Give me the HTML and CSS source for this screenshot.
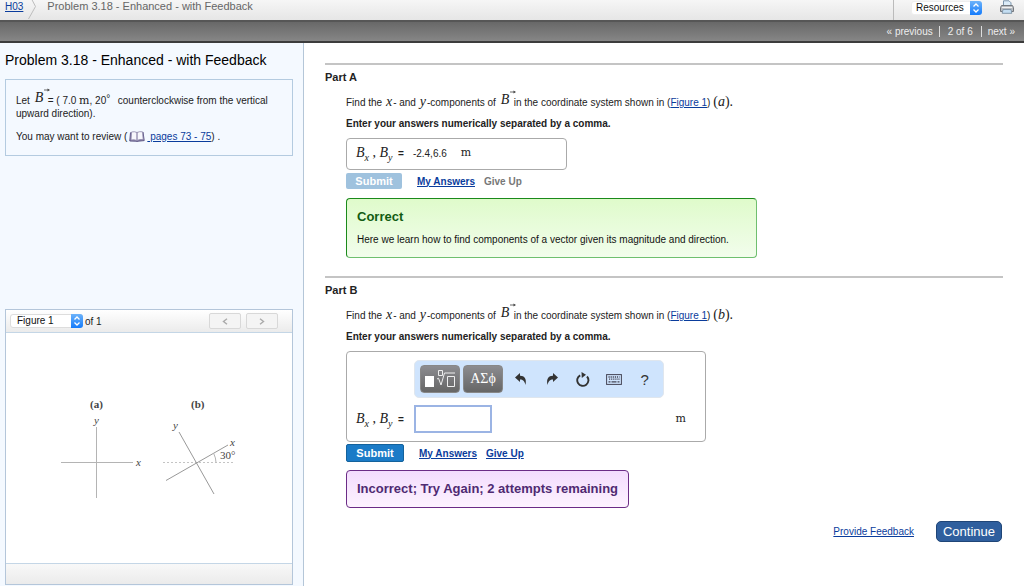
FILE: index.html
```html
<!DOCTYPE html>
<html lang="en">
<head>
<meta charset="utf-8">
<meta name="viewport" content="width=device-width, initial-scale=1">
<title>Problem 3.18 - Enhanced - with Feedback</title>
<link rel="stylesheet" href="styles.css">
</head>
<body>
<header class="topbar">
  <nav class="crumbs">
    <a href="#">H03</a>
    <svg class="crumb-sep" width="9" height="20" viewBox="0 0 9 20"><path d="M1 -6L7.500 6.500L0.500 19" fill="none" stroke="#bdbdbd"/></svg>
    <span>Problem 3.18 - Enhanced - with Feedback</span>
  </nav>
  <div class="tools">
    <div class="picker picker-resources">
      <select aria-label="Resources"><option>Resources</option></select>
      <svg class="picker-arrows" viewBox="0 0 12 14"><path d="M3.500 5.500L6 3L8.500 5.500M3.500 8.500L6 11L8.500 8.500" fill="none" stroke="#fff" stroke-width="1.300"/></svg>
    </div>
    <button class="print" aria-label="Print">
      <svg width="14" height="14" viewBox="0 0 14 14"><path d="M3.500 6V.8h5.500L11 2.800V6" fill="#dcecf8" stroke="#7d96ad"/><path d="M1.500 5.500h11l1 2v4H.5v-4z" fill="#b9bcc0" stroke="#74787e"/><path d="M2 7.500h10" stroke="#f1f1f1"/><path d="M3 9.500h8l.8 3.800H2.200z" fill="#c4def2" stroke="#8296a8"/></svg>
    </button>
  </div>
</header>
<nav class="pager">
  <a href="#">« previous</a><span class="count">2 of 6</span><a href="#">next »</a>
</nav>
<div class="layout">
  <aside class="sidebar">
    <h1>Problem 3.18 - Enhanced - with Feedback</h1>
    <section class="intro">
      <p>Let <span class="vec">B<svg width="6" height="4" viewBox="0 0 6 4"><path d="M0 2H4.500" fill="none" stroke="#444" stroke-width=".8"/><path d="M3.500 .5L6 2L3.500 3.500z" fill="#444"/></svg></span>= ( 7.0 <span class="unit">m</span>, 20<span class="deg">°</span> &nbsp;counterclockwise from the vertical upward direction).</p>
      <p>You may want to review (<svg class="book" width="16" height="12" viewBox="0 0 16 12"><path d="M1.500 1.500L.8 10l6.500.2.800.8.800-.8 6.300-.6L14 1" fill="#8b83a8" stroke="#5e5786"/><path d="M2.500 1Q5.500 .2 8 1.500V9.500Q5.500 8.300 2 9zM8 1.500Q10.500 .2 13.500.8L14.200 8.600Q10.500 8 8 9.500z" fill="#f7f7fc" stroke="#8d87aa" stroke-width=".8"/></svg><a href="#">&nbsp;pages 73 - 75</a>) .</p>
    </section>
    <section class="figure">
      <div class="figure-bar">
        <div class="picker picker-figure">
          <select aria-label="Figure"><option>Figure 1</option></select>
          <svg class="picker-arrows" viewBox="0 0 12 14"><path d="M3.500 5.500L6 3L8.500 5.500M3.500 8.500L6 11L8.500 8.500" fill="none" stroke="#fff" stroke-width="1.300"/></svg>
        </div>
        <span class="of">of 1</span>
        <button class="step" aria-label="Previous figure"><svg width="6" height="7" viewBox="0 0 6 7"><path d="M5 .8L1.500 3.500L5 6.200" fill="none" stroke="#aaa" stroke-width="1.400"/></svg></button>
        <button class="step" aria-label="Next figure"><svg width="6" height="7" viewBox="0 0 6 7"><path d="M1 .8L4.500 3.500L1 6.200" fill="none" stroke="#aaa" stroke-width="1.400"/></svg></button>
      </div>
      <div class="figure-view">
        <svg width="286" height="230" viewBox="6 333 286 230">
          <g fill="none" stroke="#b4b4b4">
            <path d="M61 462.500H133M96.500 427V498"/>
            <path d="M163 462.500H233" stroke-dasharray="2 2" stroke="#c4c4c4"/>
            <path d="M166 480.500L228 445M179 432L214 494" stroke="#999"/>
            <path d="M213.500 453Q216 458 216 462.500"/>
          </g>
          <g class="fig-text">
            <text class="fig-bold" x="90" y="408">(a)</text>
            <text class="fig-bold" x="191" y="408">(b)</text>
            <text class="fig-it" x="94" y="424">y</text>
            <text class="fig-it" x="136" y="466">x</text>
            <text class="fig-it" x="173" y="429">y</text>
            <text class="fig-it" x="230" y="446">x</text>
            <text x="220" y="459">30°</text>
          </g>
        </svg>
      </div>
      <div class="figure-foot"></div>
    </section>
  </aside>
  <main class="content">
    <section class="part">
      <h2>Part A</h2>
      <div class="part-body">
        <p class="ask">Find the <i class="var">x</i>- and <i class="var">y</i>-components of <span class="vec">B<svg width="6" height="4" viewBox="0 0 6 4"><path d="M0 2H4.500" fill="none" stroke="#444" stroke-width=".8"/><path d="M3.500 .5L6 2L3.500 3.500z" fill="#444"/></svg></span>in the coordinate system shown in (<a href="#">Figure 1</a>) <span class="tag">(<i>a</i>).</span></p>
        <p class="hint">Enter your answers numerically separated by a comma.</p>
        <div class="answer answer-done">
          <span class="lhs"><i>B</i><sub>x</sub> , <i>B</i><sub>y</sub> <b>=</b></span>
          <span class="value">-2.4,6.6</span>
          <span class="unit">m</span>
        </div>
        <div class="actions">
          <button class="submit" disabled>Submit</button>
          <a href="#">My Answers</a>
          <span class="muted">Give Up</span>
        </div>
        <div class="note correct">
          <h3>Correct</h3>
          <p>Here we learn how to find components of a vector given its magnitude and direction.</p>
        </div>
      </div>
    </section>
    <section class="part">
      <h2>Part B</h2>
      <div class="part-body">
        <p class="ask">Find the <i class="var">x</i>- and <i class="var">y</i>-components of <span class="vec">B<svg width="6" height="4" viewBox="0 0 6 4"><path d="M0 2H4.500" fill="none" stroke="#444" stroke-width=".8"/><path d="M3.500 .5L6 2L3.500 3.500z" fill="#444"/></svg></span>in the coordinate system shown in (<a href="#">Figure 1</a>) <span class="tag">(<i>b</i>).</span></p>
        <p class="hint">Enter your answers numerically separated by a comma.</p>
        <div class="answer answer-open">
          <div class="toolbar">
            <button class="key" aria-label="Templates"><svg width="32" height="20" viewBox="0 0 32 20"><rect x="1" y="7" width="9" height="11" fill="#fff"/><path d="M14.500 1.500h4v5h-4zM13 10l1.500-.8L17 16l3.500-12H31M23.500 7.500h7v10h-7z" fill="none" stroke="#eee"/></svg></button>
            <button class="key">ΑΣϕ</button>
            <button class="tool" aria-label="Undo"><svg width="12" height="12" viewBox="0 0 12 12"><path d="M0 4.500L5 0V2.800C9 2.600 12 5.500 10.500 12C9.500 8 8 6.500 5 6.500V9z" fill="#333"/></svg></button>
            <button class="tool" aria-label="Redo"><svg width="12" height="12" viewBox="0 0 12 12"><path d="M12 4.500L7 0V2.800C3 2.600 0 5.500 1.500 12C2.500 8 4 6.500 7 6.500V9z" fill="#333"/></svg></button>
            <button class="tool" aria-label="Reset"><svg width="14" height="15" viewBox="0 0 14 15"><path d="M4.200 3.300A5.600 5.600 0 1 0 11 4.500" fill="none" stroke="#333" stroke-width="1.900"/><path d="M5.500 0L10 2.800L5.800 6z" fill="#333"/></svg></button>
            <button class="tool" aria-label="Keyboard"><svg width="16" height="11" viewBox="0 0 16 11"><rect x=".6" y=".6" width="14.800" height="9.800" fill="none" stroke="#445" stroke-width="1"/><path d="M2.500 3h11M3 5.200h11" stroke="#445" stroke-width="1.300" stroke-dasharray="1.200 .9"/><path d="M2.500 7.800h2M5.500 7.800h5M11.500 7.800h2" stroke="#445" stroke-width="1.300"/></svg></button>
            <button class="tool help">?</button>
          </div>
          <label class="lhs" for="ans"><i>B</i><sub>x</sub> , <i>B</i><sub>y</sub> <b>=</b></label>
          <input id="ans" type="text">
          <span class="unit">m</span>
        </div>
        <div class="actions">
          <button class="submit">Submit</button>
          <a href="#">My Answers</a>
          <a href="#">Give Up</a>
        </div>
        <div class="note wrong"><h3>Incorrect; Try Again; 2 attempts remaining</h3></div>
      </div>
    </section>
    <footer class="finish">
      <a href="#">Provide Feedback</a>
      <button class="continue">Continue</button>
    </footer>
  </main>
</div>
</body>
</html>
```

FILE: styles.css
```css
* { box-sizing: border-box; }

body {
  margin: 0;
  min-height: 100vh;
  display: flex;
  flex-direction: column;
  background: #fff;
  color: #222;
  font: 10px/13px "Liberation Sans", Arial, sans-serif;
}

h1, h2, h3, p { margin: 0; }
a { color: #0a3c9c; }
button, select, input { font-family: inherit; margin: 0; }

.topbar {
  height: 20px;
  display: flex;
  justify-content: space-between;
  background: linear-gradient(#f6f6f6, #e6e6e6);
}

.crumbs {
  display: flex;
  align-items: flex-start;
  padding-left: 5px;
  color: #666;
  font-size: 11px;
  line-height: 13px;
}
.crumbs a { font-size: 10px; }
.crumb-sep { margin: 0 10px 0 5px; }

.tools {
  display: flex;
  gap: 18px;
  padding: 0 10px 0 17px;
  border-left: 1px solid #bbb;
}

.picker { position: relative; }
.picker select {
  width: 100%;
  height: 14px;
  padding: 0 16px 0 6px;
  appearance: none;
  border: 1px solid #ddd;
  border-radius: 3px;
  background: #fff;
  color: #111;
  font-size: 10px;
  line-height: 12px;
}
.picker-arrows {
  position: absolute;
  top: 0;
  right: 0;
  width: 12px;
  height: 14px;
  border-radius: 0 3px 3px 0;
  background: linear-gradient(#6db3fa, #147bfb);
}
.picker-resources { width: 71px; padding-top: 1px; }
.picker-resources select { padding-left: 4px; border-color: #eee; }
.picker-resources .picker-arrows { top: 1px; }
.picker-figure { width: 73px; }

.print {
  padding: 0;
  border: 0;
  background: none;
  height: 14px;
}
.print svg { display: block; }

.pager {
  height: 23px;
  display: flex;
  justify-content: flex-end;
  align-items: center;
  padding-right: 9px;
  border-top: 2px solid #565656;
  border-bottom: 2px solid #3c3c3c;
  background: linear-gradient(#686868, #868686);
  color: #eee;
  font-size: 10px;
}
.pager a { color: #eee; text-decoration: none; }
.count {
  margin: 0 6px;
  padding: 0 8px;
  border: solid #ddd;
  border-width: 0 1px;
  line-height: 11px;
}

.layout {
  flex: 1;
  display: grid;
  grid-template-columns: 304px 1fr;
}

.sidebar {
  display: flex;
  flex-direction: column;
  padding: 9px 10px 1px 5px;
  border-right: 1px solid #b4c6d8;
  background: #f4f9ff;
}
h1 {
  color: #000;
  font-size: 14px;
  font-weight: 400;
  line-height: 16px;
}
.intro {
  margin-top: 11px;
  padding: 12px 10px;
  border: 1px solid #b4cbe0;
}
.intro p + p { margin-top: 10px; }
.book { margin: 0 2px -3px 2px; }

.vec {
  position: relative;
  display: inline-block;
  width: 13px;
  margin-left: 2px;
  font: italic 14px/12px "Liberation Serif", serif;
  vertical-align: 2px;
}
.vec svg { position: absolute; left: 9px; top: -4px; }
.deg { vertical-align: 2px; line-height: 8px; margin-right: 2px; }
.unit { font: 11px/12px "DejaVu Serif", serif; }
.var { margin: 0 1px; font: italic 14px/12px "Liberation Serif", serif; }
.tag { font: 14px/12px "Liberation Serif", serif; }

.figure {
  margin-top: auto;
  border: 1px solid #b4c6da;
  background: #fff;
}
.figure-bar {
  height: 23px;
  display: flex;
  align-items: center;
  padding: 0 14px 0 4px;
  border-bottom: 1px solid #c4d6e6;
  background: linear-gradient(#fff, #ebebeb);
}
.of { margin: 0 auto 0 2px; }
.step {
  width: 32px;
  height: 16px;
  display: grid;
  place-items: center;
  padding: 0;
  border: 1px solid #d8d8d8;
  border-radius: 2px;
  background: #f4f4f4;
}
.step + .step { margin-left: 5px; }
.figure-view svg { display: block; margin: 0 auto; }
.figure-foot {
  height: 21px;
  border-top: 1px solid #c4d6e6;
  background: linear-gradient(#f8f8f8, #ebebeb);
}
.fig-text { fill: #444; font: 11px "Liberation Serif", serif; }
.fig-bold { font-weight: 700; }
.fig-it { font-style: italic; }

.content { padding: 20px 21px; }
.part { border-top: 2px solid #c4c4c4; }
.part + .part { margin-top: 18px; }
h2 {
  padding-top: 5px;
  font-size: 11px;
  line-height: 14px;
}
.part-body { padding-left: 21px; }
.ask { padding-top: 10px; line-height: 14px; }
.hint { margin-top: 7px; font-weight: 700; line-height: 14px; }

.answer {
  margin-top: 7px;
  border: 1px solid #aaa;
  border-radius: 4px;
  background: #fff;
}
.answer-done {
  width: 221px;
  height: 32px;
  display: flex;
  align-items: center;
  padding: 0 9px 2px;
}
.answer-done .value { margin: 0 14px 0 9px; }

.answer-open {
  width: 360px;
  max-width: 100%;
  display: grid;
  grid-template-columns: 58px 78px 1fr;
  align-items: center;
  row-gap: 7px;
  padding: 8px 19px 8px 9px;
}
.answer-open .unit { justify-self: end; }
.answer-open input {
  width: 78px;
  height: 28px;
  border: 2px solid #9bb4e4;
  background: #fff;
}
.lhs {
  font: 14px/16px "Liberation Serif", serif;
  white-space: nowrap;
}
.lhs sub { font-size: 10px; font-style: italic; line-height: 8px; }
.lhs b { font: 700 10px "Liberation Sans", sans-serif; margin-left: 2px; }

.toolbar {
  grid-column: 2 / -1;
  width: 250px;
  height: 38px;
  display: flex;
  align-items: center;
  padding: 0 3px 0 5px;
  border: 1px solid #dfe6ee;
  border-radius: 5px;
  background: #cfe4fd;
}
.key {
  width: 40px;
  height: 28px;
  margin-right: 3px;
  display: grid;
  place-items: center;
  padding: 0;
  border: 1px solid #888;
  border-radius: 4px;
  background: linear-gradient(#8c8c90, #666);
  color: #fff;
  font: 14px "Liberation Serif", serif;
}
.tool {
  flex: 1;
  display: grid;
  place-items: center;
  padding: 0;
  border: 0;
  background: none;
  color: #333;
}
.help { font-size: 15px; }

.actions {
  min-height: 18px;
  display: flex;
  align-items: center;
  margin-top: 2px;
  font-weight: 700;
}
.actions a + * { margin-left: 9px; }
.actions .muted { color: #777; }
.submit {
  width: 58px;
  height: 18px;
  margin-right: 15px;
  padding: 0;
  border: 1px solid #14629c;
  border-radius: 2px;
  background: #1b7bc7;
  color: #fff;
  font-size: 11px;
  font-weight: 700;
}
.submit:disabled {
  width: 56px;
  height: 16px;
  border: 0;
  background: #9fc2de;
}

.note {
  width: fit-content;
  margin-top: 8px;
  padding: 10px;
  border: 1px solid;
  border-radius: 4px;
}
.note h3 { font-size: 13px; line-height: 16px; }
.note p { margin-top: 8px; color: #111; line-height: 14px; }
.correct {
  min-width: 411px;
  border-color: #1b8a1b #6fbf6f #6fbf6f #1b8a1b;
  background: linear-gradient(#dffbcb, #f2fdec);
}
.correct h3 { color: #125c12; }
.wrong {
  border-color: #6b2c86;
  background: linear-gradient(#f3dcfd, #fdf3ff);
}
.wrong h3 { color: #4f2a72; }

.finish {
  display: flex;
  justify-content: flex-end;
  align-items: center;
  gap: 22px;
  margin-top: 13px;
  padding-right: 1px;
}
.continue {
  height: 21px;
  padding: 0 6px;
  border: 1px solid #1f4577;
  border-radius: 5px;
  background: #2f5f9e;
  color: #fff;
  font-size: 13px;
}
```
